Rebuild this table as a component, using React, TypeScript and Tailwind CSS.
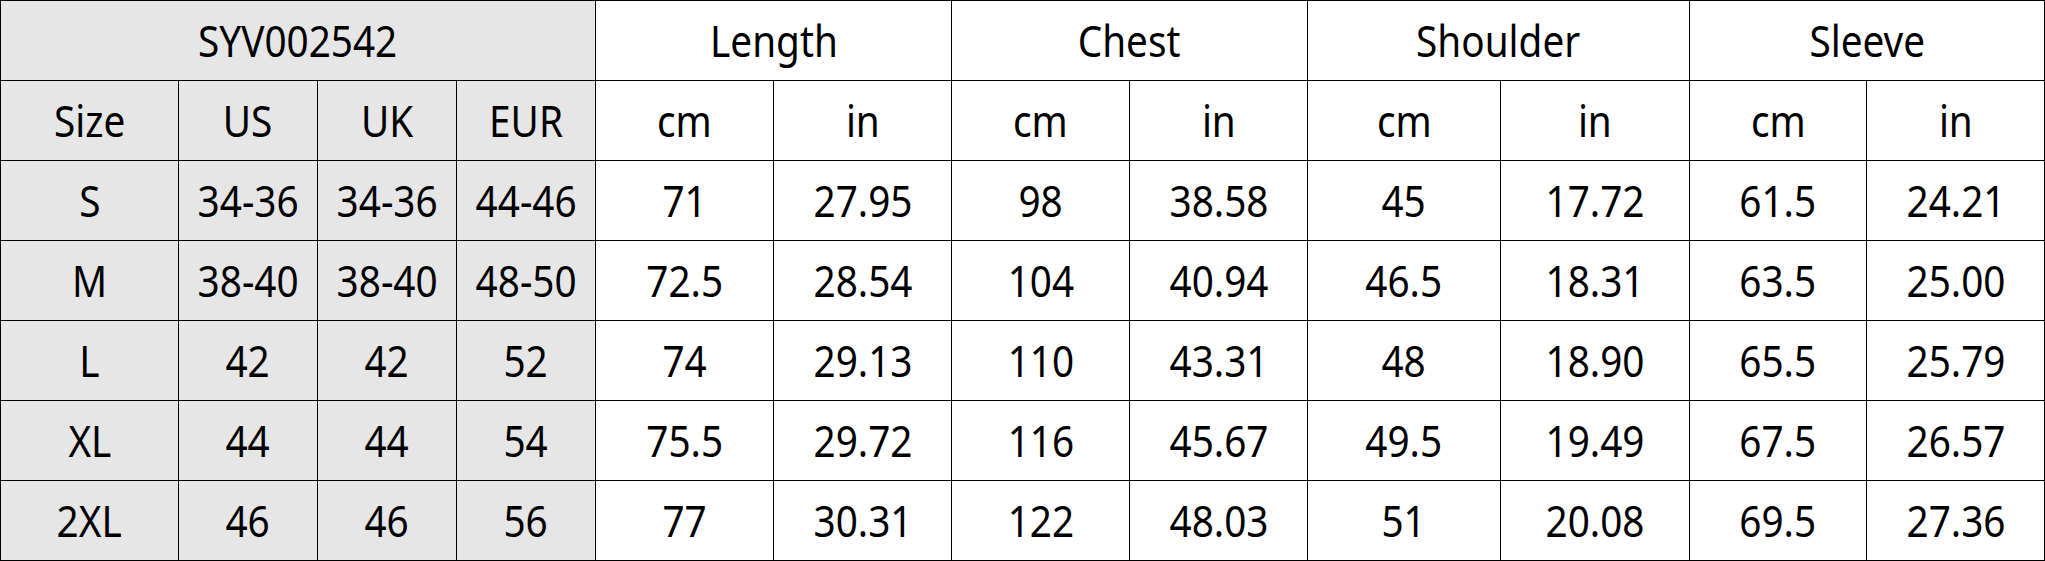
const groups = ['Length', 'Chest', 'Shoulder', 'Sleeve'];

const rows = [
  ['S', '34-36', '34-36', '44-46', '71', '27.95', '98', '38.58', '45', '17.72', '61.5', '24.21'],
  ['M', '38-40', '38-40', '48-50', '72.5', '28.54', '104', '40.94', '46.5', '18.31', '63.5', '25.00'],
  ['L', '42', '42', '52', '74', '29.13', '110', '43.31', '48', '18.90', '65.5', '25.79'],
  ['XL', '44', '44', '54', '75.5', '29.72', '116', '45.67', '49.5', '19.49', '67.5', '26.57'],
  ['2XL', '46', '46', '56', '77', '30.31', '122', '48.03', '51', '20.08', '69.5', '27.36'],
];

function Cell({ children, gray, span }: { children: React.ReactNode; gray?: boolean; span?: string }) {
  return (
    <div className={`flex items-center justify-center ${gray ? 'bg-[#e6e6e6]' : 'bg-white'} ${span ?? ''}`}>
      <span className="inline-block scale-x-90 whitespace-nowrap">{children}</span>
    </div>
  );
}

export default function App() {
  return (
    <div className="bg-white w-[2045px] h-[561px]">
      <div
        className="grid w-fit grid-cols-[177px_138px_138px_138px_177px_177px_177px_177px_192px_188px_176px_177px] grid-rows-[repeat(7,79px)] gap-px bg-black p-px text-[43px] leading-none text-black"
        style={{ fontFamily: '"Noto Sans", "Open Sans", sans-serif' }}
      >
        {/* header */}
        <Cell gray span="col-span-4">SYV002542</Cell>
        {groups.map((g) => (
          <Cell key={g} span="col-span-2">{g}</Cell>
        ))}

        {/* sub header */}
        <Cell gray>Size</Cell>
        <Cell gray>US</Cell>
        <Cell gray>UK</Cell>
        <Cell gray>EUR</Cell>
        {groups.map((g) => [
          <Cell key={g + 'cm'}>cm</Cell>,
          <Cell key={g + 'in'}>in</Cell>,
        ])}

        {rows.map((r) =>
          r.map((v, i) => (
            <Cell key={r[0] + i} gray={i < 4}>
              {v}
            </Cell>
          ))
        )}
      </div>
    </div>
  );
}
